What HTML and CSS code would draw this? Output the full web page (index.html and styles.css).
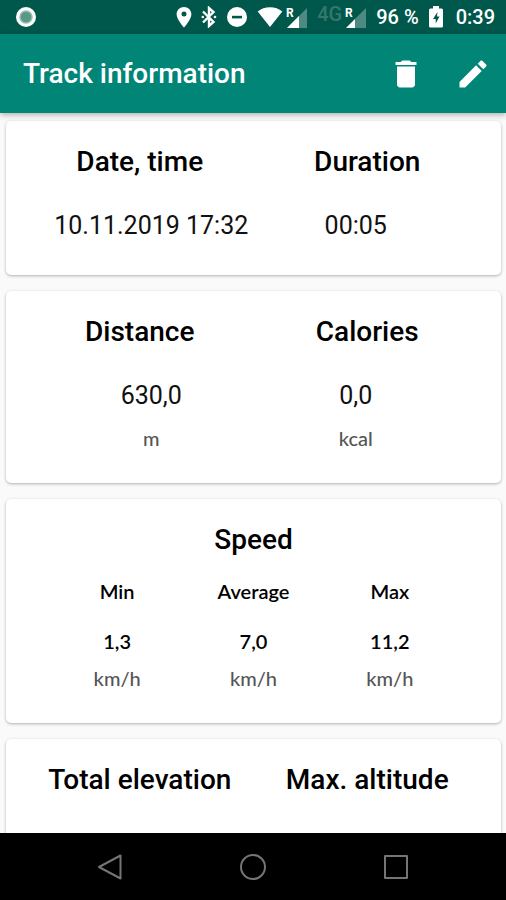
FILE: index.html
```html
<!DOCTYPE html>
<html lang="en">
<head>
    <meta charset="UTF-8">
    <meta name="viewport" content="width=device-width, initial-scale=1.0">
    <title>Track information</title>
    <link rel="stylesheet" href="styles.css">
</head>
<body>
    <!-- Status bar -->
    <div class="status-bar">
        <svg width="22" height="22" viewBox="0 0 22 22">
            <circle cx="11" cy="11" r="10" fill="#fff"/>
            <circle cx="11" cy="11" r="6" fill="#5a9886" stroke="#94beb3" stroke-width="1.5"/>
        </svg>
        <div class="status-icons">
            <svg width="16" height="22" viewBox="0 0 16 22">
                <path fill="#fff" fill-rule="evenodd" d="M8 1C3.9 1 .6 4.2.6 8.200C.6 13.200 8 21.500 8 21.500S15.400 13.200 15.400 8.200C15.400 4.200 12.100 1 8 1zM8 5.600a2.500 2.500 0 1 1 0 5a2.500 2.500 0 0 1 0-5z"/>
            </svg>
            <svg width="16" height="22" viewBox="0 0 16 22">
                <path fill="none" stroke="#fff" stroke-width="2.400" d="M2 5.500l10.500 10.500-4.500 4V2l4.500 4L2 16.500"/>
                <circle cx="1.800" cy="11" r="1.300" fill="#fff"/>
                <circle cx="14" cy="11" r="1.300" fill="#fff"/>
            </svg>
            <svg width="22" height="22" viewBox="0 0 22 22">
                <circle cx="11" cy="11" r="10" fill="#fff"/>
                <path fill="#00574b" d="M6 9.800h10v2.600H6z"/>
            </svg>
            <div class="signal">
                <svg width="26" height="22" viewBox="0 0 26 22">
                    <path fill="#fff" d="M13 21L.7 5.400C4 2.700 8.300 1.200 13 1.200s9 1.500 12.300 4.200z"/>
                </svg>
                <svg width="22" height="22" viewBox="0 0 22 22">
                    <path fill="#4d8a81" d="M21 2v20H1z"/>
                    <path fill="#fff" d="M13 10v12H1z"/>
                    <path fill="#00574b" d="M0 0h8v12H0z"/>
                    <text class="roaming" x="0" y="11">R</text>
                </svg>
            </div>
            <div class="signal">
                <span class="network">4G</span>
                <svg width="22" height="22" viewBox="0 0 22 22">
                    <path fill="#4d8a81" d="M21 2v20H1z"/>
                    <path fill="#fff" d="M10 13v9H1z"/>
                    <path fill="#00574b" d="M0 0h8v12H0z"/>
                    <text class="roaming" x="0" y="11">R</text>
                </svg>
            </div>
            <span class="battery-level">96 %</span>
            <svg width="16" height="22" viewBox="0 0 16 22">
                <path fill="#fff" d="M5 0h6v2.500h2.500q1.500 0 1.500 1.500v16q0 1.500-1.500 1.500h-11Q1 21.500 1 20V4q0-1.500 1.500-1.500H5z"/>
                <path fill="#00574b" d="M9.500 6L5 13h2.700v4.500l3.800-7H9z"/>
            </svg>
            <span class="clock">0:39</span>
        </div>
    </div>

    <!-- App bar -->
    <header class="app-bar">
        <h1 class="app-title">Track information</h1>
        <button class="icon-button" aria-label="Delete">
            <svg width="36" height="36" viewBox="0 0 24 24">
                <path fill="#fff" d="M6 19c0 1.100.9 2 2 2h8c1.100 0 2-.9 2-2V7H6v12zM19 4h-3.500l-1-1h-5l-1 1H5v2h14V4z"/>
            </svg>
        </button>
        <button class="icon-button" aria-label="Edit">
            <svg width="36" height="36" viewBox="0 0 24 24">
                <path fill="#fff" d="M3 17.250V21h3.750L17.810 9.940l-3.750-3.750L3 17.250zM20.710 7.040c.39-.39.39-1.020 0-1.410l-2.340-2.340c-.39-.39-1.020-.39-1.410 0l-1.830 1.830 3.750 3.750 1.830-1.830z"/>
            </svg>
        </button>
    </header>

    <!-- Track data -->
    <main class="content">
        <section class="card">
            <div class="headings">
                <h2>Date, time</h2>
                <h2>Duration</h2>
            </div>
            <div class="values">
                <div class="value">10.11.2019 17:32</div>
                <div class="value">00:05</div>
            </div>
        </section>

        <section class="card">
            <div class="headings">
                <h2>Distance</h2>
                <h2>Calories</h2>
            </div>
            <div class="values">
                <div>
                    <div class="value">630,0</div>
                    <div class="unit">m</div>
                </div>
                <div>
                    <div class="value">0,0</div>
                    <div class="unit">kcal</div>
                </div>
            </div>
        </section>

        <section class="card">
            <h2>Speed</h2>
            <table class="speed">
                <thead>
                    <tr><th>Min</th><th>Average</th><th>Max</th></tr>
                </thead>
                <tbody>
                    <tr><td>1,3</td><td>7,0</td><td>11,2</td></tr>
                    <tr class="units"><td>km/h</td><td>km/h</td><td>km/h</td></tr>
                </tbody>
            </table>
        </section>

        <section class="card">
            <div class="headings">
                <h2>Total elevation</h2>
                <h2>Max. altitude</h2>
            </div>
        </section>
    </main>

    <!-- System navigation -->
    <nav class="nav-bar">
        <button class="nav-button" aria-label="Back">
            <svg width="28" height="28" viewBox="0 0 28 28"><path d="M24.500 2.500v23L3 14z"/></svg>
        </button>
        <button class="nav-button" aria-label="Home">
            <svg width="28" height="28" viewBox="0 0 28 28"><circle cx="14" cy="14" r="12"/></svg>
        </button>
        <button class="nav-button" aria-label="Recent apps">
            <svg width="28" height="28" viewBox="0 0 28 28"><rect x="3" y="3" width="22" height="22"/></svg>
        </button>
    </nav>
</body>
</html>
```
FILE: styles.css
```css
* {
    margin: 0;
    padding: 0;
    box-sizing: border-box;
}

body {
    height: 100vh;
    display: flex;
    flex-direction: column;
    overflow: hidden;
    background: #fafafa;
    color: #000;
    font-family: Roboto, sans-serif;
}

svg {
    display: block;
    flex: none;
}

button {
    background: none;
    border: none;
    cursor: pointer;
}

/* Status bar */
.status-bar {
    flex: none;
    height: 34px;
    padding: 0 11px 0 15px;
    display: flex;
    align-items: center;
    justify-content: space-between;
    background: #00574b;
    color: #fff;
    font-size: 20px;
    line-height: 24px;
    white-space: nowrap;
}

.status-icons {
    display: flex;
    align-items: center;
    gap: 9px;
}

.signal {
    display: flex;
    gap: 3px;
}

.roaming {
    fill: #fff;
    font-size: 12px;
    font-weight: 700;
}

.network {
    color: #35776d;
    font-weight: 500;
    line-height: 16px;
}

.battery-level,
.clock {
    font-weight: 500;
}

.clock {
    margin-left: 3px;
}

/* App bar */
.app-bar {
    flex: none;
    height: 79px;
    padding: 0 15px 0 23px;
    display: flex;
    align-items: center;
    gap: 31px;
    background: #008577;
    color: #fff;
    box-shadow: 0 2px 6px rgba(0, 0, 0, 0.3);
    z-index: 1;
}

.app-title {
    flex: 1;
    font-size: 28px;
    font-weight: 500;
    line-height: 32px;
}

/* Cards */
.content {
    flex: 1;
    min-height: 0;
    padding: 8px 5px 0 6px;
    display: flex;
    flex-direction: column;
    gap: 16px;
    overflow: hidden;
}

.card {
    flex: none;
    min-height: 154px;
    padding: 25px 0 33px;
    background: #fff;
    border-radius: 5px;
    box-shadow: 0 1px 3px rgba(0, 0, 0, 0.3);
    text-align: center;
}

.headings,
.values {
    display: grid;
    grid-template-columns: 1fr 1fr;
}

.headings {
    padding: 0 20px;
}

.values {
    padding: 32px 43px 0;
}

h2 {
    font-size: 28px;
    font-weight: 500;
    line-height: 32px;
}

.value {
    color: #111;
    font-size: 25px;
    font-weight: 400;
    line-height: 32px;
}

.unit {
    margin-top: 14px;
    color: #555;
    font-family: Lato, sans-serif;
    font-size: 20px;
    font-weight: 500;
    line-height: 24px;
}

/* Speed table */
.speed {
    width: calc(100% - 86px);
    margin: 23px auto 0;
    table-layout: fixed;
    border-collapse: collapse;
    font-family: Lato, sans-serif;
    font-size: 20px;
    line-height: 24px;
}

.speed th,
.speed td {
    font-weight: 600;
}

.speed td {
    padding-top: 26px;
}

.speed .units td {
    padding-top: 13px;
    color: #555;
    font-weight: 500;
}

/* System navigation */
.nav-bar {
    flex: none;
    height: 67px;
    padding: 0 39px;
    display: flex;
    align-items: center;
    background: #000;
}

.nav-button {
    flex: 1;
    display: flex;
    justify-content: center;
}

.nav-button svg {
    fill: none;
    stroke: #757575;
    stroke-width: 2;
    stroke-linejoin: round;
}
```
